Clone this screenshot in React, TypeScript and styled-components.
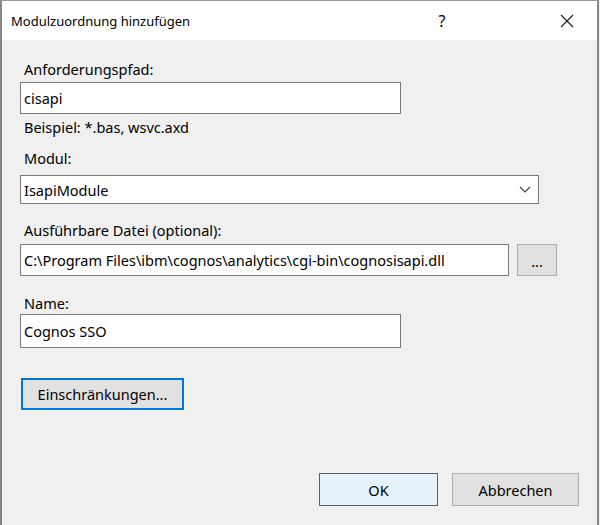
import React from 'react';
import styled, { createGlobalStyle } from 'styled-components';

const GlobalStyle = createGlobalStyle`
  html, body {
    margin: 0;
    padding: 0;
    background: #f0f0f0;
  }
  body {
    font-family: "Noto Sans", "Segoe UI", sans-serif;
    font-size: 14.5px;
    color: #000;
  }
`;

const App = () => {
  return (
    <>
      <GlobalStyle />
      <Window>
        <TitleBar>
          <Title>Modulzuordnung hinzufügen</Title>
          <HelpButton>?</HelpButton>
          <CloseButton>
            <svg width="14" height="14" viewBox="0 0 14 14">
              <path d="M1 1 L13 13 M13 1 L1 13" stroke="#1a1a1a" strokeWidth="1.1" fill="none" />
            </svg>
          </CloseButton>
        </TitleBar>
        <Body>
          <Label $top={19}>Anforderungspfad:</Label>
          <TextBox $top={3} $width={381}>cisapi</TextBox>
          <Label $top={3}>Beispiel: *.bas, wsvc.axd</Label>
          <Label $top={11}>Modul:</Label>
          <Select $top={7}>
            <span>IsapiModule</span>
            <svg width="12" height="7" viewBox="0 0 12 7">
              <path d="M1 1 L6 6 L11 1" stroke="#404040" strokeWidth="1.1" fill="none" />
            </svg>
          </Select>
          <Label $top={16}>Ausführbare Datei (optional):</Label>
          <PathRow>
            <TextBox $top={0} $width={489}>C:\Program Files\ibm\cognos\analytics\cgi-bin\cognosisapi.dll</TextBox>
            <BrowseButton>...</BrowseButton>
          </PathRow>
          <Label $top={17}>Name:</Label>
          <TextBox $top={1} $width={381} $height={34}>Cognos SSO</TextBox>
          <RestrictButton>Einschränkungen...</RestrictButton>
          <Footer>
            <OkButton>OK</OkButton>
            <CancelButton>Abbrechen</CancelButton>
          </Footer>
        </Body>
      </Window>
    </>
  );
};

// Dialog frame
const Window = styled.div`
  width: 599px;
  height: 525px;
  box-sizing: border-box;
  display: flex;
  flex-direction: column;
  background: #f0f0f0;
  border-top: 1px solid #9a9a9a;
  border-left: 2px solid #878787;
  border-right: 2px solid #878787;
`;

const TitleBar = styled.div`
  height: 39px;
  flex-shrink: 0;
  background: #fff;
  display: flex;
  align-items: center;
  padding-left: 9px;
`;

const Title = styled.div`
  flex: 1;
  font-size: 13px;
  color: #000;
`;

const HelpButton = styled.div`
  width: 60px;
  text-align: center;
  font-size: 16px;
  margin-right: 65px;
`;

const CloseButton = styled.div`
  width: 60px;
  display: flex;
  justify-content: center;
  align-items: center;
`;

const Body = styled.div`
  flex: 1;
  display: flex;
  flex-direction: column;
  padding: 0 18px 19px 18px;
`;

const Label = styled.div<{ $top: number }>`
  margin-top: ${p => p.$top}px;
  height: 20px;
  line-height: 20px;
  padding-left: 4px;
`;

const TextBox = styled.div<{ $top: number; $width: number; $height?: number }>`
  margin-top: ${p => p.$top}px;
  width: ${p => p.$width}px;
  height: ${p => p.$height ?? 32}px;
  box-sizing: border-box;
  border: 1px solid #7a7a7a;
  background: #fff;
  display: flex;
  align-items: center;
  padding-left: 3px;
  white-space: nowrap;
  overflow: hidden;
`;

const Select = styled.div<{ $top: number }>`
  margin-top: ${p => p.$top}px;
  width: 519px;
  height: 29px;
  box-sizing: border-box;
  border: 1px solid #7a7a7a;
  background: #fff;
  display: flex;
  align-items: center;
  justify-content: space-between;
  padding: 0 7px 0 3px;
`;

const PathRow = styled.div`
  margin-top: 4px;
  display: flex;
  gap: 8px;
`;

const Button = styled.div`
  box-sizing: border-box;
  display: flex;
  align-items: center;
  justify-content: center;
  background: #e1e1e1;
  border: 1px solid #adadad;
`;

const BrowseButton = styled(Button)`
  width: 40px;
  height: 32px;
  padding-top: 2px;
`;

const RestrictButton = styled(Button)`
  margin-top: 30px;
  margin-left: 1px;
  width: 163px;
  height: 32px;
  border: 2px solid #0078d7;
`;

const Footer = styled.div`
  margin-top: auto;
  display: flex;
  justify-content: flex-end;
  gap: 14px;
`;

const OkButton = styled(Button)`
  width: 119px;
  height: 33px;
  background: #e5f1fb;
  border-color: #0078d7;
`;

const CancelButton = styled(Button)`
  width: 127px;
  height: 33px;
`;

export default App;
